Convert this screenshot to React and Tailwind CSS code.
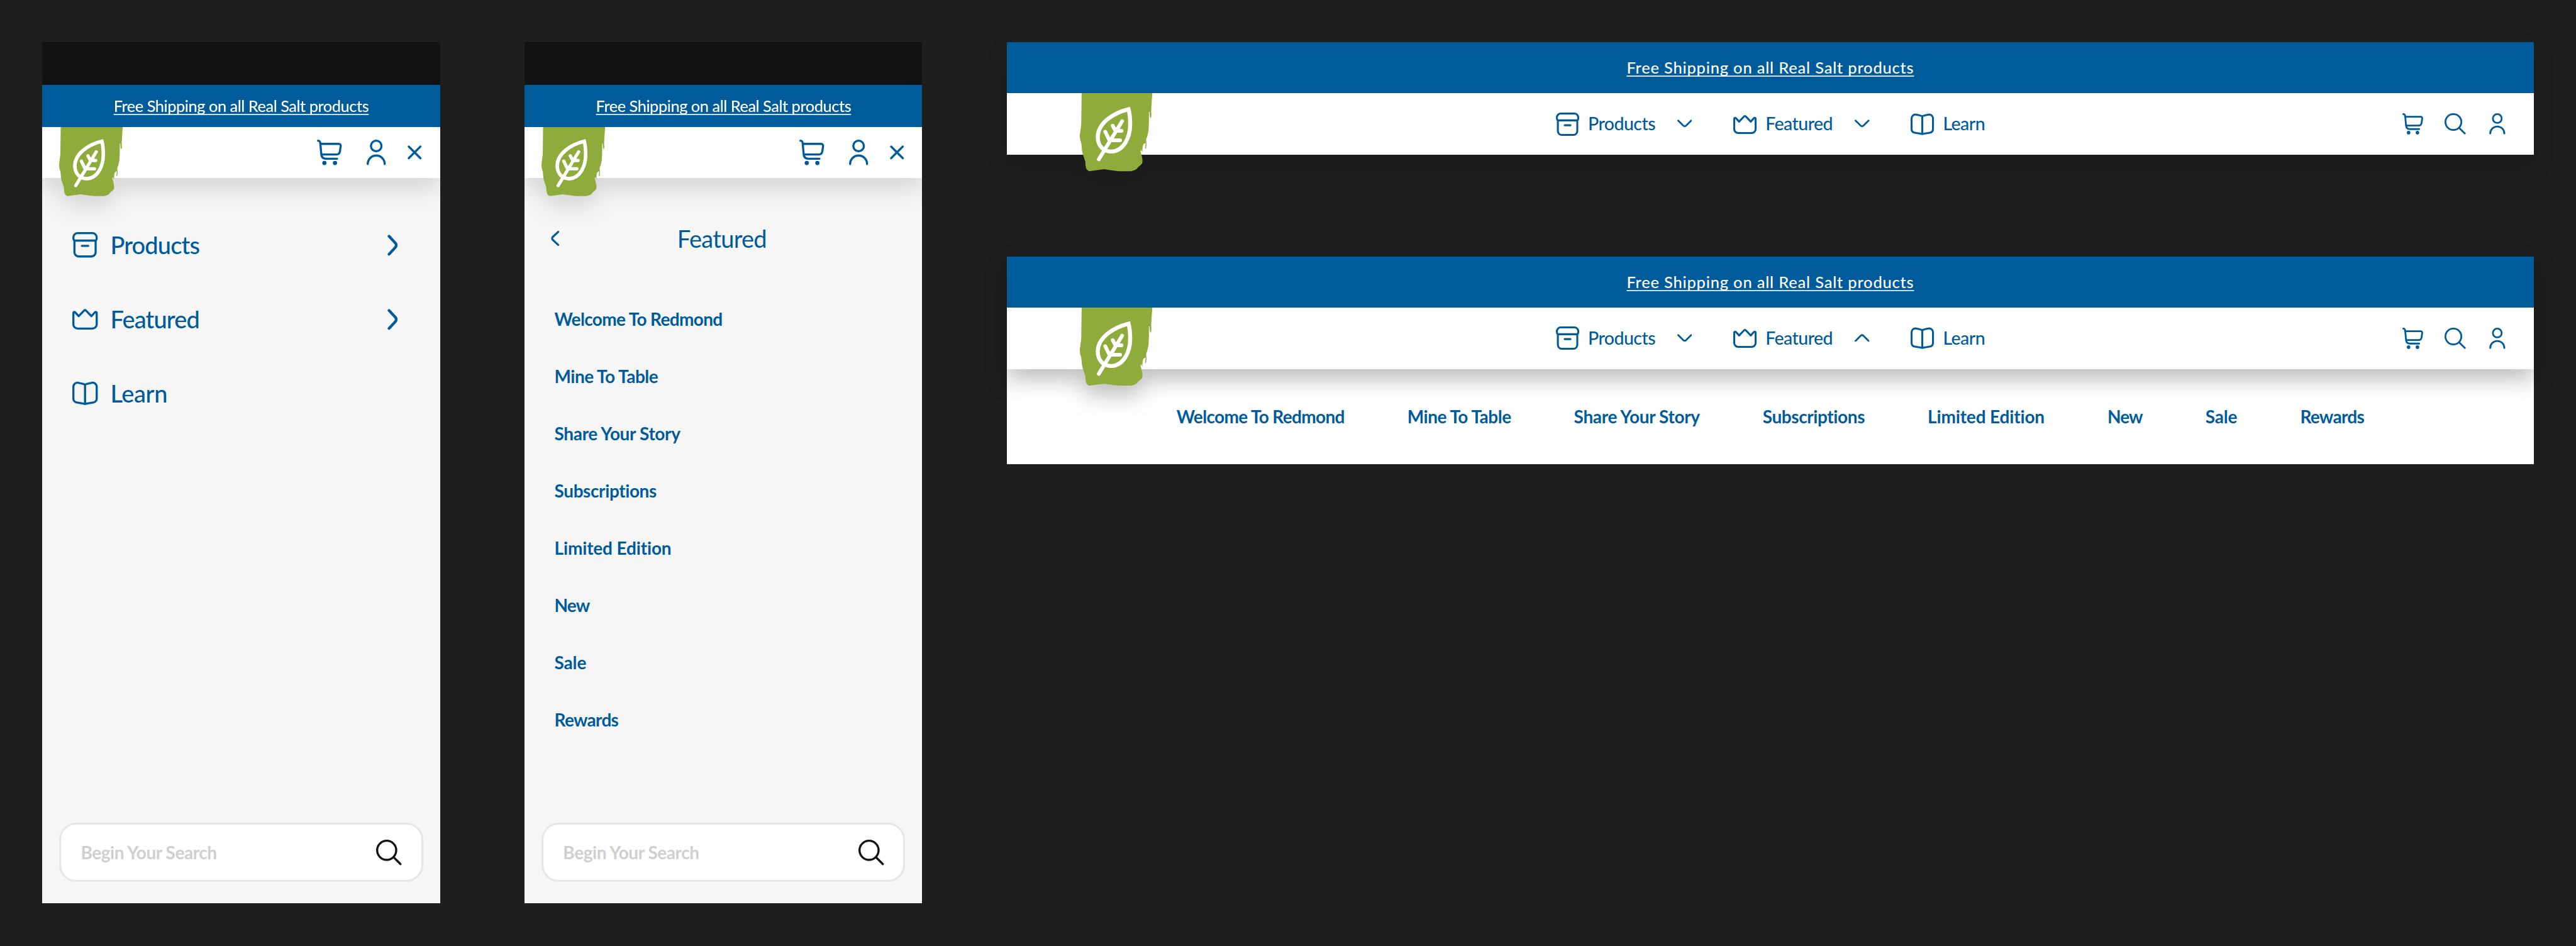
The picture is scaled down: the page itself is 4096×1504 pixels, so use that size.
import React from 'react';

const stroke = {
  fill: 'none',
  stroke: 'currentColor',
  strokeWidth: 2,
  strokeLinecap: 'round',
  strokeLinejoin: 'round',
};

function Icon({ className, children }) {
  return (
    <svg viewBox="0 0 24 24" className={`shrink-0 overflow-visible ${className}`} {...stroke} aria-hidden="true">
      {children}
    </svg>
  );
}

const CartIcon = ({ className }) => (
  <Icon className={className}>
    <path d="M1 1C2.6 1 3.1 1.8 3.2 4L4.1 13.8C4.3 16.5 5.8 18 8.5 18H19" />
    <path d="M3.2 4H20.6C21.9 4 22.6 4.9 22.4 6.1L21.7 11C21.4 12.9 20.1 14 18.3 14H4.2" />
    <circle cx="7" cy="22" r="2" fill="currentColor" stroke="none" />
    <circle cx="17" cy="22" r="2" fill="currentColor" stroke="none" />
  </Icon>
);

const UserIcon = ({ className }) => (
  <Icon className={className}>
    <circle cx="12" cy="6" r="5" />
    <path d="M4 23a8 8 0 0 1 16 0" />
  </Icon>
);

const SearchIcon = ({ className }) => (
  <Icon className={className}>
    <circle cx="10" cy="10" r="9" />
    <path d="M16.5 16.5L23 23" />
  </Icon>
);

const CloseIcon = ({ className }) => (
  <Icon className={className}>
    <path d="M6.5 6.5L17.5 17.5M17.5 6.5L6.5 17.5" />
  </Icon>
);

const BoxIcon = ({ className }) => (
  <Icon className={className}>
    <path d="M2 8C1.3 7.5 1 6.8 1 6V5A4 4 0 0 1 5 1H19A4 4 0 0 1 23 5V6C23 6.8 22.7 7.5 22 8Z" />
    <path d="M2 8V19A4 4 0 0 0 6 23H18A4 4 0 0 0 22 19V8" />
    <path d="M9 13H15" />
  </Icon>
);

const CrownIcon = ({ className }) => (
  <Icon className={className}>
    <path d="M1 17V6.3C1 5.4 2 5 2.7 5.7L6 9.3L11.2 3.9C11.6 3.4 12.4 3.4 12.8 3.9L18 9.3L21.3 5.7C22 5 23 5.4 23 6.3V17A4 4 0 0 1 19 21H5A4 4 0 0 1 1 17Z" />
  </Icon>
);

const BookIcon = ({ className }) => (
  <Icon className={className}>
    <path d="M12 4C11.3 3.2 10.6 3 5.6 2.1C3 1.7 1 3.5 1 6V17C1 18.9 2.3 20.4 4.2 20.7L12 22L19.8 20.7C21.7 20.4 23 18.9 23 17V6C23 3.5 21 1.7 18.4 2.1C13.4 3 12.7 3.2 12 4Z" />
    <path d="M12 4V22" />
  </Icon>
);

const ChevronRight = ({ className }) => (
  <svg viewBox="0 0 20 40" className={className} {...stroke} strokeWidth={5.2} aria-hidden="true">
    <path d="M3 3L14.8 15.6A6.2 6.2 0 0 1 14.8 24.4L3 37" />
  </svg>
);

const ChevronLeft = ({ className }) => (
  <svg viewBox="0 0 16 29" className={className} {...stroke} strokeWidth={3.9} aria-hidden="true">
    <path d="M14 2L3.7 11.4A4.2 4.2 0 0 0 3.7 17.6L14 27" />
  </svg>
);

const ChevronDown = ({ className }) => (
  <svg viewBox="0 0 28 15" className={className} {...stroke} strokeWidth={3.4} aria-hidden="true">
    <path d="M1.7 2L11.4 11.7A3.8 3.8 0 0 0 16.6 11.7L26.3 2" />
  </svg>
);

function LeafLogo({ className }) {
  return (
    <svg viewBox="37 60 360 390" preserveAspectRatio="none" className={className} aria-hidden="true">
      <path
        fill="#8fab3c"
        d="M46 60H397L394 100L391 150C393 168 392 182 389 186L385 178L383 154L380 152L380 205L378 248L371 278Q366 288 366 293L368 318L365 338L361 334L363 318L364 309C356 310 350 317 349 326L347 355L342 342L338 350L345 375Q349 392 348 402Q347 412 340 418L328 427L318 439Q306 446 290 449H235L205 446L157 439L83 449Q72 444 68 434Q64 418 64 400L52 365Q46 345 46 328Q46 310 41 300Q37 290 37 268L44 215Z"
      />
      <path
        fill="none"
        stroke="#fff"
        strokeWidth="20"
        strokeLinejoin="miter"
        d="M279 140C200 160 126 210 126 280C127 325 155 351 195 351C255 348 287 280 287 215C287 185 284 160 279 140Z"
      />
      <path
        fill="none"
        stroke="#fff"
        strokeWidth="18.5"
        strokeLinecap="round"
        strokeLinejoin="round"
        d="M131 390L247 200M200 222L214 248H244M163 252L184 295H237"
      />
    </svg>
  );
}

const LINKS = [
  { label: 'Welcome To Redmond', spacing: 'tracking-[-0.65px]' },
  { label: 'Mine To Table', spacing: 'tracking-[-0.5px]' },
  { label: 'Share Your Story', spacing: 'tracking-[-0.35px]' },
  { label: 'Subscriptions', spacing: 'tracking-[-0.4px]' },
  { label: 'Limited Edition', spacing: 'tracking-[-0.15px]' },
  { label: 'New', spacing: 'tracking-[-0.9px]' },
  { label: 'Sale', spacing: 'tracking-[-0.15px]' },
  { label: 'Rewards', spacing: 'tracking-[-0.7px]' },
];

const NAV = [
  { label: 'Products', icon: BoxIcon, more: true, spacing: 'tracking-[-0.85px]' },
  { label: 'Featured', icon: CrownIcon, more: true, spacing: 'tracking-[-0.85px]' },
  { label: 'Learn', icon: BookIcon, more: false, spacing: 'tracking-[-0.4px]' },
];

function Promo({ className }) {
  return (
    <a
      href="#"
      className={`whitespace-nowrap text-[25.5px] leading-none font-medium text-white underline decoration-white/80 decoration-[2px] underline-offset-[3px] [text-decoration-skip-ink:none] ${className}`}
    >
      Free Shipping on all Real Salt products
    </a>
  );
}

function MobileFrame({ children }) {
  return (
    <section className="flex h-[1368.7px] w-[632.1px] shrink-0 flex-col overflow-hidden bg-[#f6f6f6]">
      <div className="h-[67.42px] shrink-0 bg-[#121212]" />
      <header className="relative z-10 shrink-0 drop-shadow-[0_17px_17px_rgba(0,0,0,0.13)]">
        <div className="flex h-[67.42px] items-center justify-center bg-[#005b9a]">
          <Promo className="tracking-[-0.53px]" />
        </div>
        <div className="relative flex h-[80.9px] items-center justify-end bg-white pr-[20.2px]">
          <LeafLogo className="absolute top-0 left-[27px] h-[110px] w-[101.2px]" />
          <CartIcon className="mr-[33.7px] size-[40.45px]" />
          <UserIcon className="mr-[20.2px] size-[40.45px]" />
          <CloseIcon className="size-[40.45px]" />
        </div>
      </header>
      <div className="flex-1">{children}</div>
      <div className="mx-[27px] mb-[33.7px] flex h-[94.4px] shrink-0 items-center justify-between rounded-[27px] border-[3px] border-[#e6e6e6] bg-white pr-[30.7px] pl-[31px]">
        <span className="pb-px text-[28px] font-bold tracking-[-0.45px] text-[#cfcfcf]">Begin Your Search</span>
        <SearchIcon className="size-[40.45px] text-[#121212]" />
      </div>
    </section>
  );
}

function MobileMenu() {
  return (
    <ul className="pt-[47.6px] pr-[66.6px] pl-[47.2px]">
      {NAV.map(({ label, icon: Glyph, more, spacing }) => (
        <li key={label} className="flex h-[118px] items-center">
          <Glyph className="size-[40.45px]" />
          <span className={`ml-[20.4px] flex-1 pb-px text-[38px] leading-none font-medium ${spacing}`}>{label}</span>
          {more && <ChevronRight className="h-[33.7px] w-[16.86px]" />}
        </li>
      ))}
    </ul>
  );
}

function MobileSubmenu() {
  return (
    <div className="pt-[37px] pl-[47.2px]">
      <div className="flex h-[118px] items-center pr-[60px]">
        <ChevronLeft className="-ml-[5.5px] h-[24px] w-[13.3px]" />
        <h2 className="flex-1 pb-px text-center text-[38px] leading-none font-normal tracking-[-0.7px]">Featured</h2>
      </div>
      <ul className="pt-[23.4px]">
        {LINKS.map(({ label, spacing }) => (
          <li key={label} className={`flex h-[91.02px] items-center text-[28px] leading-none font-bold ${spacing}`}>
            {label}
          </li>
        ))}
      </ul>
    </div>
  );
}

function DesktopHeader({ open }) {
  return (
    <header
      className={`relative z-10 ${open ? 'drop-shadow-[0_17px_17px_rgba(0,0,0,0.25)]' : 'drop-shadow-[0_17px_17px_rgba(0,0,0,0.1)]'}`}
    >
      <div className="flex h-[80.9px] items-center justify-center bg-[#005b9a]">
        <Promo className="tracking-[0.79px]" />
      </div>
      <div className="relative grid h-[97.8px] grid-cols-[1fr_auto_1fr] items-center bg-white pr-[40.5px]">
        <LeafLogo className="absolute top-0 left-[116px] h-[124.5px] w-[115.3px]" />
        <nav className="col-start-2 flex items-center gap-[65.7px] pl-[41px]">
          {NAV.map(({ label, icon: Glyph, more }) => (
            <div key={label} className="flex items-center">
              <Glyph className="size-[37.1px]" />
              <span
                className={`ml-[14px] pb-[1.4px] text-[28.5px] leading-none font-medium tracking-[-0.55px] ${more ? 'w-[107px]' : 'w-[67px]'}`}
              >
                {label}
              </span>
              {more && (
                <ChevronDown
                  className={`mb-px ml-[34.8px] h-[12.6px] w-[23.6px] ${open === label ? 'rotate-180' : ''}`}
                />
              )}
            </div>
          ))}
        </nav>
        <div className="flex items-center justify-end gap-[33.7px]">
          <CartIcon className="size-[33.7px]" />
          <SearchIcon className="size-[33.7px]" />
          <UserIcon className="size-[33.7px]" />
        </div>
      </div>
    </header>
  );
}

export default function App() {
  return (
    <main className="flex h-[1504px] w-[4096px] items-start gap-[134.85px] overflow-hidden bg-[#1e1e1e] pt-[67.42px] pl-[67.42px] font-['Lato',sans-serif] text-[#005b9a]">
      <MobileFrame>
        <MobileMenu />
      </MobileFrame>
      <MobileFrame>
        <MobileSubmenu />
      </MobileFrame>
      <div className="flex w-[2427.3px] shrink-0 flex-col gap-[161.8px]">
        <DesktopHeader />
        <section>
          <DesktopHeader open="Featured" />
          <ul className="flex h-[151.7px] items-center justify-center gap-[100px] bg-white">
            {LINKS.map(({ label, spacing }) => (
              <li key={label} className={`whitespace-nowrap text-[28px] leading-none font-bold ${spacing}`}>
                {label}
              </li>
            ))}
          </ul>
        </section>
      </div>
    </main>
  );
}
